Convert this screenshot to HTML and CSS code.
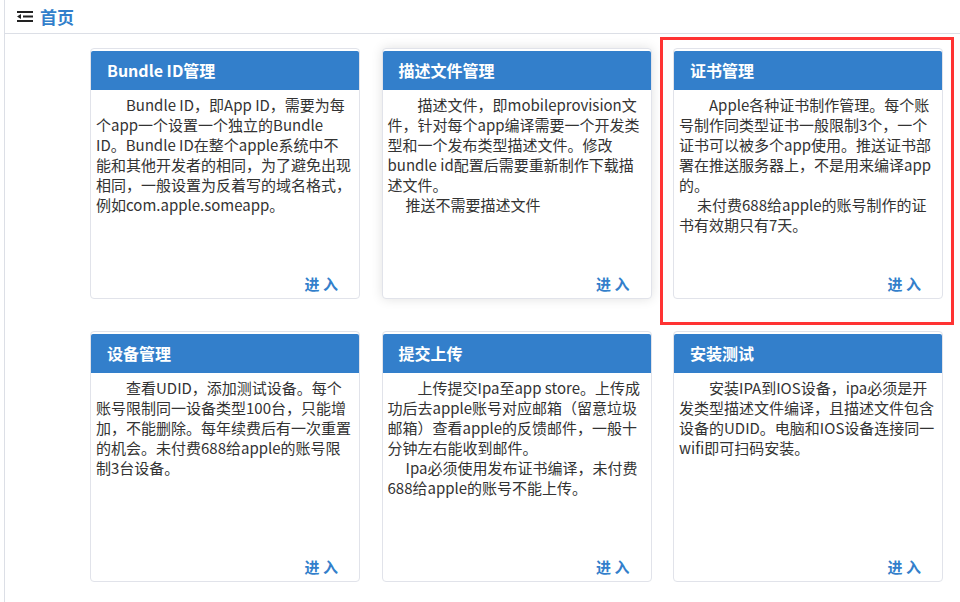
FILE: index.html
```html
<!DOCTYPE html>
<html lang="zh-CN">
<head>
    <meta charset="UTF-8">
    <meta name="viewport" content="width=device-width, initial-scale=1.0">
    <title>首页</title>
    <link rel="stylesheet" href="styles.css">
</head>
<body>
    <div class="main">
        <div class="topbar">
            <svg class="fold-icon" width="16" height="11" viewBox="0 0 16 11">
                <rect x="0" y="0" width="16" height="2"/>
                <path d="M0 5.5 L4 3 L4 8 Z"/>
                <rect x="6" y="4.5" width="10" height="2"/>
                <rect x="0" y="9" width="16" height="2"/>
            </svg>
            <span class="crumb">首页</span>
        </div>

        <div class="cards">
            <div class="card">
                <div class="card-title">Bundle ID管理</div>
                <div class="card-body">
                    <p class="para">Bundle ID，即App ID，需要为每个app一个设置一个独立的Bundle ID。Bundle ID在整个apple系统中不能和其他开发者的相同，为了避免出现相同，一般设置为反着写的域名格式，例如com.apple.someapp。</p>
                </div>
                <a class="enter" href="#">进 入</a>
            </div>

            <div class="card card-hover">
                <div class="card-title">描述文件管理</div>
                <div class="card-body">
                    <p class="para">描述文件，即mobileprovision文件，针对每个app编译需要一个开发类型和一个发布类型描述文件。修改bundle id配置后需要重新制作下载描述文件。</p>
                    <p class="para para-short">推送不需要描述文件</p>
                </div>
                <a class="enter" href="#">进 入</a>
            </div>

            <div class="card">
                <div class="card-title">证书管理</div>
                <div class="card-body">
                    <p class="para">Apple各种证书制作管理。每个账号制作同类型证书一般限制3个，一个证书可以被多个app使用。推送证书部署在推送服务器上，不是用来编译app的。</p>
                    <p class="para para-short">未付费688给apple的账号制作的证书有效期只有7天。</p>
                </div>
                <a class="enter" href="#">进 入</a>
                <div class="mark"></div>
            </div>

            <div class="card">
                <div class="card-title">设备管理</div>
                <div class="card-body">
                    <p class="para">查看UDID，添加测试设备。每个账号限制同一设备类型100台，只能增加，不能删除。每年续费后有一次重置的机会。未付费688给apple的账号限制3台设备。</p>
                </div>
                <a class="enter" href="#">进 入</a>
            </div>

            <div class="card">
                <div class="card-title">提交上传</div>
                <div class="card-body">
                    <p class="para">上传提交Ipa至app store。上传成功后去apple账号对应邮箱（留意垃圾邮箱）查看apple的反馈邮件，一般十分钟左右能收到邮件。</p>
                    <p class="para para-short">Ipa必须使用发布证书编译，未付费688给apple的账号不能上传。</p>
                </div>
                <a class="enter" href="#">进 入</a>
            </div>

            <div class="card">
                <div class="card-title">安装测试</div>
                <div class="card-body">
                    <p class="para">安装IPA到IOS设备，ipa必须是开发类型描述文件编译，且描述文件包含设备的UDID。电脑和IOS设备连接同一wifi即可扫码安装。</p>
                </div>
                <a class="enter" href="#">进 入</a>
            </div>
        </div>
    </div>
</body>
</html>
```

FILE: styles.css
```css
/* 页面基础 */
body {
    margin: 0;
    background: #fff;
    color: #333;
    font-family: "Noto Sans CJK SC", "Noto Sans", sans-serif;
}

.main {
    margin-left: 4px;
    min-height: 100vh;
    border-left: 1px solid #dcdfe6;
}

/* 顶部面包屑 */
.topbar {
    height: 33px;
    border-bottom: 1px solid #dcdfe6;
    display: flex;
    align-items: center;
    padding-left: 12px;
}

.fold-icon {
    fill: #222;
    margin-right: 7px;
}

.crumb {
    color: #337fcb;
    font-size: 17px;
    font-weight: bold;
}

/* 功能卡片 */
.cards {
    display: grid;
    grid-template-columns: repeat(3, 270px);
    column-gap: 21.5px;
    row-gap: 32px;
    padding: 14px 0 0 85px;
}

.card {
    position: relative;
    height: 251px;
    box-sizing: border-box;
    border: 1px solid #e1e3ea;
    border-radius: 4px;
    padding-top: 2px;
    display: flex;
    flex-direction: column;
    background: #fff;
}

.card-hover {
    box-shadow: 0 0 12px rgba(0, 0, 0, 0.12);
}

.card-title {
    height: 39px;
    line-height: 39px;
    background-color: #337fcb;
    color: #fff;
    font-size: 16px;
    font-weight: bold;
    padding-left: 16px;
    border-radius: 2px 2px 0 0;
}

.card-body {
    flex: 1;
    padding: 5px 6px 0 5px;
    font-size: 15px;
    line-height: 20px;
}

.para {
    margin: 0;
    text-indent: 30px;
}

.para-short {
    text-indent: 18px;
}

.enter {
    align-self: flex-end;
    margin: 0 21px 4px 0;
    color: #337fcb;
    font-size: 15px;
    line-height: 20px;
    font-weight: bold;
    text-decoration: none;
}

/* 红色标注框 */
.mark {
    position: absolute;
    left: -14px;
    top: -12px;
    right: -12px;
    bottom: -27px;
    border: 3px solid #ff3333;
    pointer-events: none;
}
```
